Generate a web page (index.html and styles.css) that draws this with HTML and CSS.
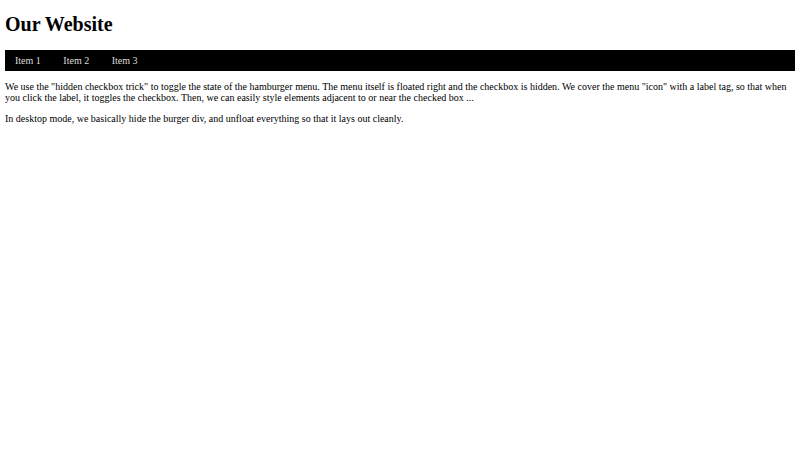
FILE: index.html
```html
<!DOCTYPE html>
<html>
<head>
<meta charset="utf-8">
<link rel="stylesheet" href="styles.css">
</head>
<body>
<h1 class="title">Our Website</h1>
<nav class="menu">
  <a class="menu-item" href="#">Item 1</a>
  <a class="menu-item" href="#">Item 2</a>
  <a class="menu-item" href="#">Item 3</a>
</nav>
<p class="text">We use the "hidden checkbox trick" to toggle the state of the hamburger menu. The menu itself is floated right and the checkbox is hidden. We cover the menu "icon" with a label tag, so that when you click the label, it toggles the checkbox. Then, we can easily style elements adjacent to or near the checked box ...</p>
<p class="text">In desktop mode, we basically hide the burger div, and unfloat everything so that it lays out cleanly.</p>
</body>
</html>
```
FILE: styles.css
```css
body {
  margin: 5px;
  font-family: "Liberation Serif", serif;
  font-size: 10px;
  color: #000;
  background: #fff;
}
.title {
  font-size: 20px;
  font-weight: bold;
  margin: 8.4px 0 13.4px;
}
.menu {
  background: #000;
}
.menu-item {
  display: inline-block;
  color: #ddd;
  text-decoration: none;
  padding: 5px 10px;
}
.text {
  margin: 10px 0;
}
```
